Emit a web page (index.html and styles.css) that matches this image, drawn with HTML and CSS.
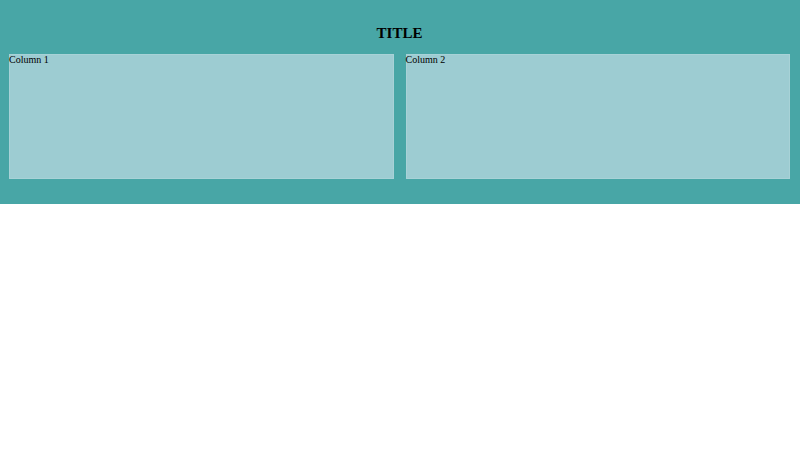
FILE: index.html
```html
<!DOCTYPE html>
<html lang="en">
<head>
	<meta charset="UTF-8">
	<title>Title</title>
	<link rel="stylesheet" href="styles.css">
</head>
<body>
	<div class="header">
		<h1 class="title">TITLE</h1>
		<div class="row">
			<div class="col">Column 1</div>
			<div class="col">Column 2</div>
		</div>
	</div>
</body>
</html>
```

FILE: styles.css
```css
*{
	padding:0;
	margin:0;
}
body{
	font-family:"Liberation Serif","Times New Roman",serif;
	font-size:10px;
	color:#000;
}
.header{
	padding:25px 10px 25px 9px;
	background-color:#48a6a6;
}
.title{
	font-size:15px;
	line-height:17px;
	font-weight:bold;
	text-align:center;
	margin-bottom:12px;
}
.row{
	display:flex;
	gap:12px;
}
.col{
	flex:1;
	height:125px;
	background-color:#9dccd2;
	box-shadow:0 0 0 1px rgba(255,255,255,0.12) inset;
}
```
